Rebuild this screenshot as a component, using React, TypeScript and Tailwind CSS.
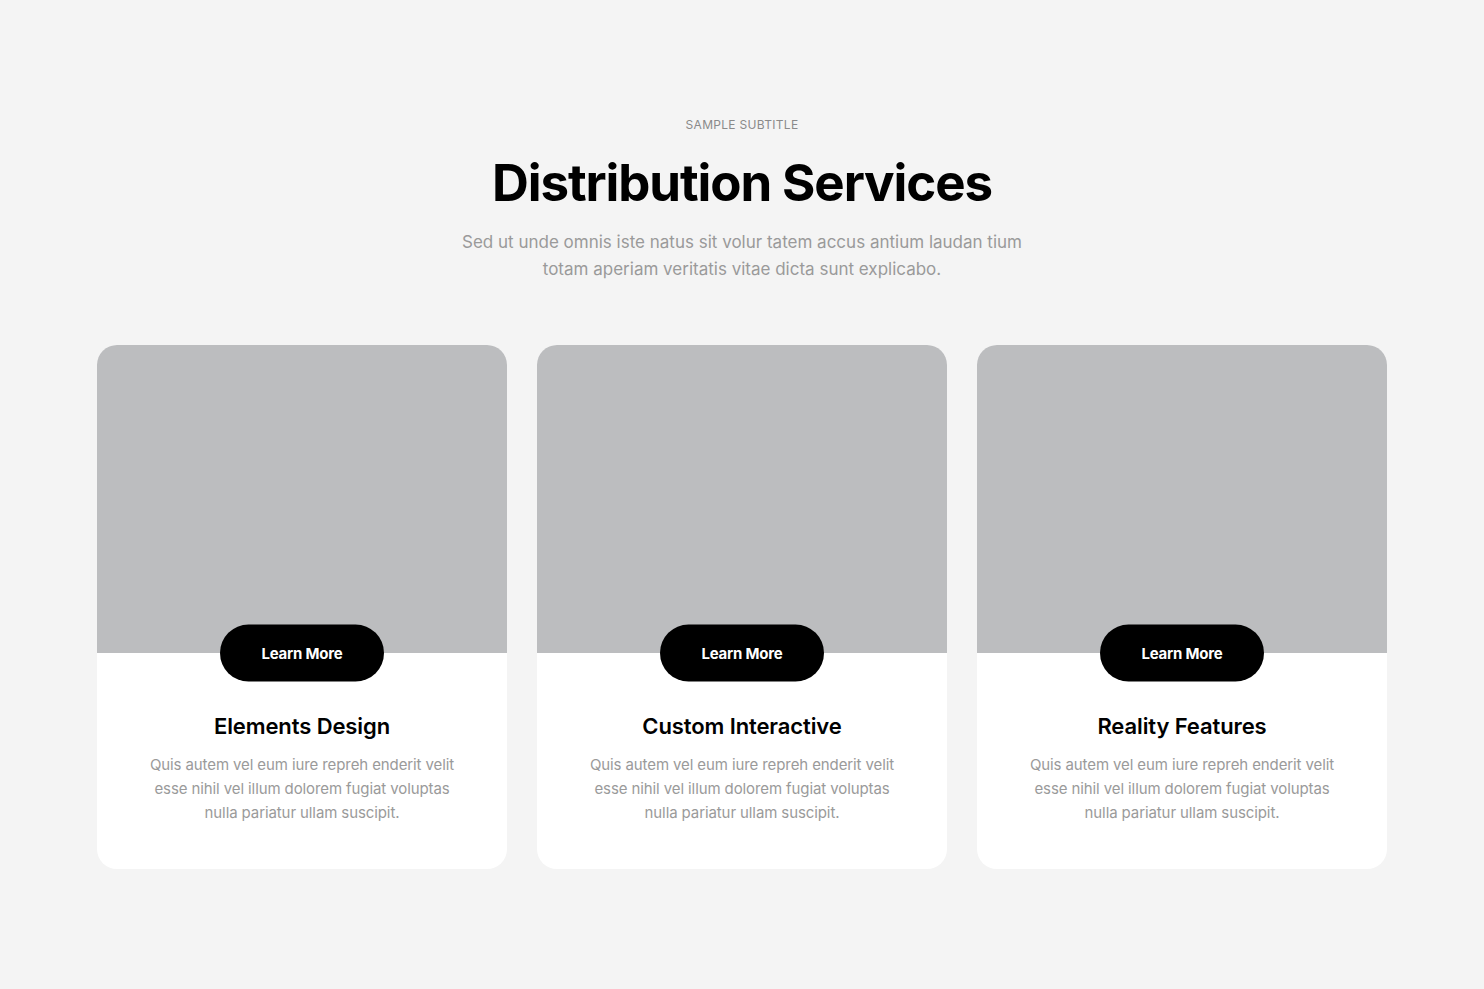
const services = [
  { title: 'Elements Design' },
  { title: 'Custom Interactive' },
  { title: 'Reality Features' },
];

const desc = 'Quis autem vel eum iure repreh enderit velit esse nihil vel illum dolorem fugiat voluptas nulla pariatur ullam suscipit.';

function ServiceCard({ title }: { title: string }) {
  return (
    <div className="flex h-[524px] w-[410px] flex-col overflow-hidden rounded-[20px] bg-white">
      <div className="relative h-[308px] shrink-0 bg-[#bcbdbf]">
        <a
          href="#"
          className="absolute bottom-0 left-1/2 flex h-[57px] w-[164px] -translate-x-1/2 translate-y-1/2 items-center justify-center rounded-full bg-black pt-[2px] text-[15px] font-bold tracking-[-0.2px] text-white"
        >
          Learn More
        </a>
      </div>
      <div className="flex flex-col items-center px-10 pt-[58px] text-center">
        <h3 className="text-[22px] leading-[30px] font-semibold tracking-[-0.1px] text-black">{title}</h3>
        <p className="mt-[12px] w-[320px] text-[15px] leading-[24px] tracking-[-0.1px] text-[#9a9a9a]">{desc}</p>
      </div>
    </div>
  );
}

export default function App() {
  return (
    <div className="min-h-[989px] w-full bg-[#f4f4f4] font-['Inter',sans-serif]">
      <div className="flex flex-col items-center pt-[118px]">
        <div className="text-[12px] leading-[14px] tracking-[0.3px] text-[#8a8a8a] uppercase">Sample Subtitle</div>
        <h2 className="mt-[20px] text-[51px] leading-[62px] font-bold tracking-[-1.1px] text-black">Distribution Services</h2>
        <p className="mt-[15px] w-[600px] text-center text-[17px] leading-[27px] tracking-[0px] text-[#9a9a9a]">
          Sed ut unde omnis iste natus sit volur tatem accus antium laudan tium totam aperiam veritatis vitae dicta sunt explicabo.
        </p>
        <div className="mt-[62px] flex gap-[30px]">
          {services.map((s) => (
            <ServiceCard key={s.title} title={s.title} />
          ))}
        </div>
      </div>
    </div>
  );
}
